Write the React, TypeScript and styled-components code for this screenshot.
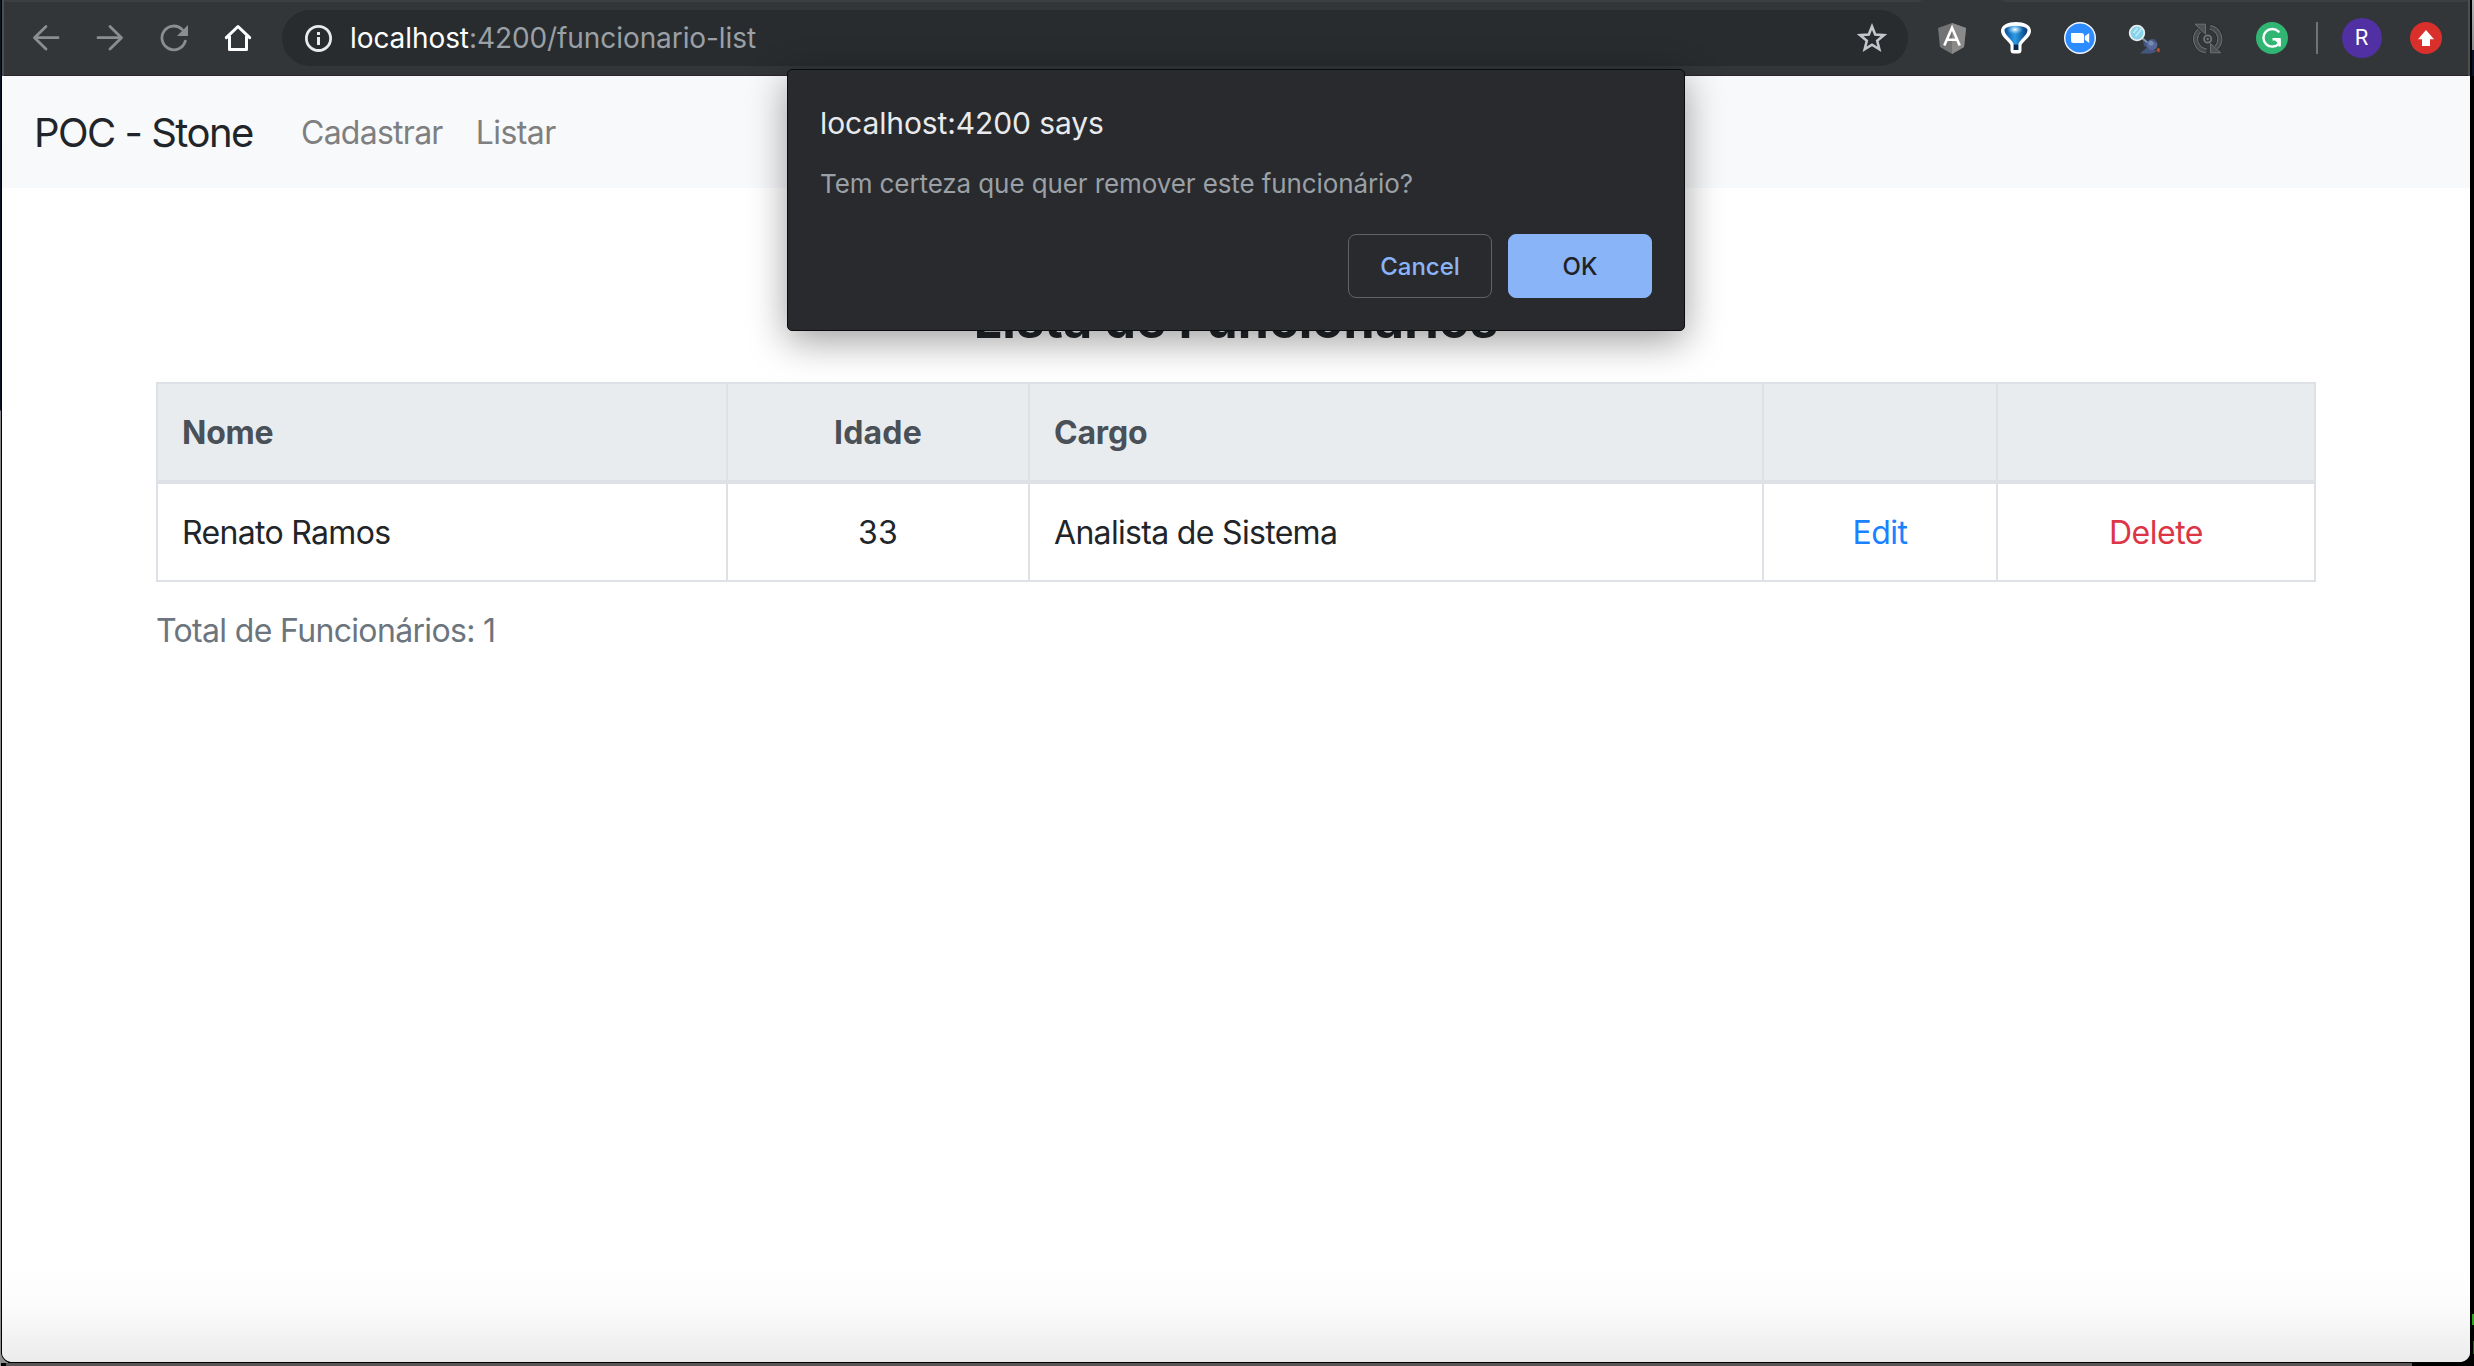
import React from "react";
import styled, { createGlobalStyle } from "styled-components";

const GlobalStyle = createGlobalStyle`
  *, *::before, *::after { box-sizing: border-box; }
  html, body { margin: 0; padding: 0; background: #000; }
  body { font-family: Inter, "Liberation Sans", sans-serif; overflow: hidden; }
  button { font: inherit; }
`;

/* ---------- desktop and window ---------- */

const Desktop = styled.div`
  height: 1366px;
  padding: 0 4px 4px 2px;
  background:
    linear-gradient(#000, #000) 1px 0 / 1px 1354px no-repeat,
    linear-gradient(#0b1524 0, #0b1220 410px, #85878b 411px, #8f9093 1366px) 0 0 / 1px 1366px no-repeat,
    linear-gradient(#8c8c8c, #8c8c8c) 0 1352px / 8px 11px no-repeat,
    linear-gradient(#b4b4b4, #8d8d8d) 2472px 0 / 2px 50px no-repeat,
    linear-gradient(#0a1226, #0a1226) 2472px 50px / 2px 26px no-repeat,
    linear-gradient(#2fa31f, #2fa31f) 2472px 1314px / 2px 11px no-repeat,
    linear-gradient(#205a1b, #205a1b) 2473px 1341px / 1px 13px no-repeat,
    linear-gradient(#5b5557, #5b5557) 6px 1363px / 2406px 3px no-repeat,
    #000;
`;

const BrowserWindow = styled.div`
  position: relative;
  display: flex;
  flex-direction: column;
  height: 1362px;
  overflow: hidden;
  border-radius: 0 0 10px 10px;
  box-shadow: 0 0 0 1px #000;
  background: #fff;
`;

/* ---------- browser toolbar ---------- */

const Toolbar = styled.header`
  display: flex;
  align-items: center;
  flex: none;
  height: 76px;
  padding: 0 26px 0 10px;
  border: solid #4c4f52;
  border-width: 0 2px;
  background:
    linear-gradient(#292529, #292529) 0 75px / 100% 1px no-repeat,
    linear-gradient(90deg, #3c3f42 1914px, #323639 1920px, #323639 1996px, #3c3f42 2002px) 0 0 / 100% 2px no-repeat,
    #323639;
`;

const ToolSlot = styled.span`
  display: flex;
  align-items: center;
  justify-content: center;
  flex: none;
  width: 64px;
  height: 76px;
`;

const AddressBar = styled.div`
  display: flex;
  align-items: center;
  width: 1626px;
  height: 56px;
  margin: 0 12px;
  padding: 0 21px 0 22px;
  border-radius: 28px;
  background: #282c2f;
`;

const Address = styled.div`
  flex: 1;
  margin-left: 18px;
  font-size: 28px;
  line-height: 56px;
  letter-spacing: -0.08px;
  color: #9aa0a6;
  white-space: pre;
`;

const Host = styled.span`
  color: #fff;
`;

const Divider = styled.span`
  width: 2px;
  height: 32px;
  margin: 0 24px 0 12px;
  background: #717477;
`;

const Avatar = styled.span`
  display: flex;
  align-items: center;
  justify-content: center;
  width: 40px;
  height: 40px;
  margin-right: 28px;
  padding-right: 1px;
  border-radius: 50%;
  background: #5030a2;
  color: #fff;
  font: 400 22px/40px Roboto, sans-serif;
`;

/* ---------- application ---------- */

const Navbar = styled.nav`
  display: flex;
  align-items: center;
  flex: none;
  height: 112px;
  padding: 2px 0 0 32px;
  background: #f8f9fb;
`;

const Brand = styled.a`
  width: 265px;
  font-size: 40px;
  line-height: 60px;
  letter-spacing: -1.52px;
  color: #212529;
  white-space: nowrap;
`;

const NavLinks = styled.div`
  display: flex;
  gap: 31px;
`;

const NavLink = styled.a<{ $tracking: string }>`
  font-size: 32px;
  line-height: 48px;
  letter-spacing: ${(p) => p.$tracking};
  color: #7f7f80;
  padding-left: 2px;
`;

const Page = styled.main`
  flex: 1;
  padding: 102px 154px 0;
  background: linear-gradient(#fff, #fff 1080px, #fbfbfb 1120px, #ebebeb 1174px);
`;

const Title = styled.h2`
  margin: 0 0 32px;
  font-size: 50px;
  font-weight: 700;
  line-height: 60px;
  letter-spacing: 0.25px;
  text-align: center;
  color: #212529;
`;

const Table = styled.table`
  width: 2160px;
  table-layout: fixed;
  border-collapse: separate;
  border-spacing: 0;
  border: solid #dee2e6;
  border-width: 0 2px 2px 0;
  font-size: 32px;
  line-height: 48px;
`;

const Column = styled.col<{ $width: number }>`
  width: ${(p) => p.$width}px;
`;

const HeadCell = styled.th<{ $center?: boolean; $tracking?: string }>`
  height: 98px;
  padding: 2px 24px 0;
  border: solid #dee2e6;
  border-width: 2px 0 0 2px;
  background: #e9ecef;
  color: #495057;
  font-weight: 700;
  letter-spacing: ${(p) => p.$tracking ?? "-0.2px"};
  text-align: ${(p) => (p.$center ? "center" : "left")};
`;

const Cell = styled.td<{ $center?: boolean; $tracking?: string }>`
  height: 100px;
  padding: 2px 24px 0;
  border: solid #dee2e6;
  border-width: 4px 0 0 2px;
  color: #212529;
  letter-spacing: ${(p) => p.$tracking ?? "-0.68px"};
  text-align: ${(p) => (p.$center ? "center" : "left")};
`;

const Action = styled.a<{ $danger?: boolean }>`
  letter-spacing: -0.48px;
  color: ${(p) => (p.$danger ? "#dc3545" : "#1a82ff")};
`;

const Total = styled.p`
  margin: 25px 0 0;
  font-size: 32px;
  line-height: 48px;
  letter-spacing: -0.66px;
  color: #6c757d;
`;

/* ---------- confirm dialog ---------- */

const Dialog = styled.div`
  position: absolute;
  top: 69px;
  left: 785px;
  width: 898px;
  height: 262px;
  display: flex;
  flex-direction: column;
  padding: 33px 32px 32px;
  border: 1px solid #0b0c0d;
  border-radius: 5px;
  background: #292a2d;
  box-shadow: 0 10px 38px rgba(0, 0, 0, 0.38);
`;

const DialogTitle = styled.div`
  font-size: 30px;
  line-height: 40px;
  letter-spacing: -0.1px;
  color: #e8eaed;
`;

const DialogMessage = styled.div`
  margin-top: 24px;
  font-size: 26px;
  line-height: 34px;
  letter-spacing: -0.1px;
  color: #9aa0a6;
`;

const DialogActions = styled.div`
  display: flex;
  justify-content: flex-end;
  gap: 16px;
  margin-top: auto;
`;

const DialogButton = styled.button<{ $primary?: boolean }>`
  width: 144px;
  height: 64px;
  padding: 0;
  border: 1px solid ${(p) => (p.$primary ? "#8ab4f8" : "#5f6368")};
  border-radius: 8px;
  background: ${(p) => (p.$primary ? "#8ab4f8" : "transparent")};
  color: ${(p) => (p.$primary ? "#202124" : "#8ab4f8")};
  font-size: 24px;
  font-weight: 500;
`;

/* ---------- icons ---------- */

const BackIcon = () => (
  <svg width="28" height="28" viewBox="0 0 28 28" fill="none" stroke="#8b8e90" strokeWidth="2.8" strokeLinecap="round" strokeLinejoin="round">
    <path d="M26 13.7H3M14 2.5L2.5 13.7 14 25" />
  </svg>
);

const ForwardIcon = () => (
  <svg width="28" height="28" viewBox="0 0 28 28" fill="none" stroke="#8b8e90" strokeWidth="2.8" strokeLinecap="round" strokeLinejoin="round">
    <path d="M2 13.7H25M14 2.5L25.5 13.7 14 25" />
  </svg>
);

const ReloadIcon = () => (
  <svg width="28" height="28" viewBox="0 0 28 28">
    <path d="M25.3 17.2A11.9 11.9 0 1 1 22.2 5.4" fill="none" stroke="#8b8e90" strokeWidth="2.8" strokeLinecap="round" />
    <path d="M28 1v11H17z" fill="#8b8e90" />
  </svg>
);

const HomeIcon = () => (
  <svg width="28" height="28" viewBox="0 0 28 28" fill="none" stroke="#fff" strokeWidth="3" strokeLinecap="round" strokeLinejoin="round">
    <path d="M2.3 13.7L14 2.5l11.7 11.2M5.5 12.5v13h17v-13" />
  </svg>
);

const InfoIcon = () => (
  <svg width="28" height="28" viewBox="0 0 28 28">
    <circle cx="14.5" cy="14.4" r="12.1" fill="none" stroke="#e8eaed" strokeWidth="2.8" />
    <path d="M13 8h3v3h-3zM13 13h3v8h-3z" fill="#e8eaed" />
  </svg>
);

const StarIcon = () => (
  <svg width="30" height="30" viewBox="0 0 30 30">
    <path d="M15 3.6l3.2 8 8.6.6-6.6 5.6 2.1 8.5-7.3-4.6-7.3 4.6 2.1-8.5-6.600-5.600 8.600-.6z" fill="none" stroke="#c3c7cb" strokeWidth="2.6" strokeLinejoin="miter" />
  </svg>
);

const AngularIcon = () => (
  <svg width="30" height="32" viewBox="0 0 30 32">
    <path d="M15 1l14 5-2 19-12 7L3 25 1 6z" fill="#737373" />
    <path d="M15 1l14 5-2 19-12 7z" fill="#8a8a8a" />
    <path d="M7.3 23.5L15 5.8l7.7 17.7M10.3 17.8h9.4" fill="none" stroke="#fff" strokeWidth="2.6" />
  </svg>
);

const FunnelIcon = () => (
  <svg width="32" height="32" viewBox="0 0 32 32">
    <defs>
      <linearGradient id="funnelBody" x1="0" x2="1">
        <stop offset="0" stopColor="#0b4f9c" />
        <stop offset=".45" stopColor="#2b9be6" />
        <stop offset="1" stopColor="#083b78" />
      </linearGradient>
      <radialGradient id="funnelGlow" cx=".5" cy=".5" r=".5">
        <stop offset="0" stopColor="#fff" />
        <stop offset="1" stopColor="#8fd0f5" stopOpacity="0" />
      </radialGradient>
    </defs>
    <path d="M16 0C24 0 31 3 31 9C31 14.500 24 18.500 21.500 23V28Q21.500 31.500 18.500 31.500H13.500Q10.500 31.500 10.500 28V23C8 18.500 1 14.500 1 9C1 3 8 0 16 0Z" fill="#fff" />
    <path d="M4.500 8C5 2.600 27 2.600 27.500 8C27.500 13.500 19.500 17.500 18.300 22.500V28H13.700V22.500C12.500 17.500 4.500 13.500 4.500 8Z" fill="url(#funnelBody)" />
    <ellipse cx="15" cy="7.500" rx="8" ry="5" fill="url(#funnelGlow)" />
    <path d="M13.700 22.500h4.600v5.500h-4.600z" fill="#09294f" />
  </svg>
);

const ZoomIcon = () => (
  <svg width="32" height="32" viewBox="0 0 32 32">
    <circle cx="16" cy="16" r="15.3" fill="#2d8cff" stroke="#f4f7fb" strokeWidth="1.4" />
    <path d="M7 11h10.500q2.500 0 2.500 2.500V21H9.500Q7 21 7 18.500zM20.800 14.300l4.400-3.300v10l-4.400-3.300z" fill="#fff" />
  </svg>
);

const InspectorIcon = () => (
  <svg width="32" height="32" viewBox="0 0 32 32">
    <path d="M14.500 16.500l6 5" stroke="#8396bd" strokeWidth="2" />
    <path d="M12 31.500l8-7 9 5-6 2zM15 19l1 5 5 2-2-5z" fill="#44557f" />
    <circle cx="24" cy="22.700" r="5.400" fill="#56689a" />
    <circle cx="23" cy="21" r="2.600" fill="#7889b4" />
    <path d="M20.500 17.500l3.500 1 3-1.500 1.500 4z" fill="#44557f" />
    <path d="M29.500 26l2.500.8-.8 4-2.700-2.300z" fill="#c1502c" />
    <circle cx="9" cy="11" r="7.300" fill="#86d2ea" stroke="#e8edf0" strokeWidth="1.800" />
    <path d="M5.500 11l4-5M7.500 14.500l6-7.500" stroke="#b9e8f5" strokeWidth="2" />
  </svg>
);

const SyncIcon = () => (
  <svg width="32" height="32" viewBox="0 0 32 32">
    <g fill="none" stroke="#202224" strokeWidth="6.4">
      <path d="M14.200 28.900A12 12 0 0 1 7.200 8.500M18 5.200A12 12 0 0 1 24.200 25.500" />
    </g>
    <g fill="none" stroke="#6d6f71" strokeWidth="5.2">
      <path d="M14.200 28.900A12 12 0 0 1 7.200 8.500M18 5.200A12 12 0 0 1 24.200 25.500" />
    </g>
    <g fill="none" stroke="#474a4c" strokeWidth="3.2">
      <path d="M14.200 28.900A12 12 0 0 1 7.200 8.500M18 5.200A12 12 0 0 1 24.200 25.500" />
    </g>
    <path d="M3 2.200H13.500V12zM28.700 30.800H18.500V21.500z" fill="#505355" stroke="#6d6f71" strokeWidth="1" />
    <circle cx="15.700" cy="17" r="3.600" fill="#323639" stroke="#737577" strokeWidth="1.800" />
    <circle cx="15.700" cy="17" r="1.200" fill="#737577" />
  </svg>
);

const GrammarlyIcon = () => (
  <svg width="32" height="32" viewBox="0 0 32 32">
    <circle cx="16" cy="16" r="16" fill="#31b573" />
    <path d="M22.600 9.700A8.800 8.800 0 1 0 23 21.400" fill="none" stroke="#fff" strokeWidth="2.400" strokeLinecap="round" />
    <path d="M16.500 17.300h7v7.200" fill="none" stroke="#fff" strokeWidth="2.400" />
    <path d="M18.300 17.600h6.400v6.600z" fill="#fff" />
  </svg>
);

const UpdateIcon = () => (
  <svg width="32" height="32" viewBox="0 0 32 32">
    <circle cx="16" cy="16" r="16" fill="#d9302c" />
    <path d="M16 8l8 9.300h-4V24h-8v-6.700H8z" fill="#fff" />
  </svg>
);

/* ---------- page ---------- */

const extensions = [AngularIcon, FunnelIcon, ZoomIcon, InspectorIcon, SyncIcon, GrammarlyIcon];
const navigation = [BackIcon, ForwardIcon, ReloadIcon, HomeIcon];
const columnWidths = [570, 302, 734, 234, 318];
const employees = [{ nome: "Renato Ramos", idade: 33, cargo: "Analista de Sistema" }];

export default function App() {
  return (
    <Desktop>
      <GlobalStyle />
      <BrowserWindow>
        <Toolbar>
          {navigation.map((Icon, i) => (
            <ToolSlot key={i}><Icon /></ToolSlot>
          ))}
          <AddressBar>
            <InfoIcon />
            <Address><Host>localhost</Host>:4200/funcionario-list</Address>
            <StarIcon />
          </AddressBar>
          {extensions.map((Icon, i) => (
            <ToolSlot key={i}><Icon /></ToolSlot>
          ))}
          <Divider />
          <Avatar>R</Avatar>
          <UpdateIcon />
        </Toolbar>

        <Navbar>
          <Brand>POC - Stone</Brand>
          <NavLinks>
            <NavLink $tracking="-0.74px">Cadastrar</NavLink>
            <NavLink $tracking="-0.57px">Listar</NavLink>
          </NavLinks>
        </Navbar>

        <Page>
          <Title>Lista de Funcionários</Title>
          <Table>
            <colgroup>
              {columnWidths.map((w, i) => <Column key={i} $width={w} />)}
            </colgroup>
            <thead>
              <tr>
                <HeadCell>Nome</HeadCell>
                <HeadCell $center $tracking="0.2px">Idade</HeadCell>
                <HeadCell>Cargo</HeadCell>
                <HeadCell />
                <HeadCell />
              </tr>
            </thead>
            <tbody>
              {employees.map((e) => (
                <tr key={e.nome}>
                  <Cell>{e.nome}</Cell>
                  <Cell $center $tracking="0.2px">{e.idade}</Cell>
                  <Cell>{e.cargo}</Cell>
                  <Cell $center><Action>Edit</Action></Cell>
                  <Cell $center><Action $danger>Delete</Action></Cell>
                </tr>
              ))}
            </tbody>
          </Table>
          <Total>Total de Funcionários: {employees.length}</Total>
        </Page>

        <Dialog role="alertdialog">
          <DialogTitle>localhost:4200 says</DialogTitle>
          <DialogMessage>Tem certeza que quer remover este funcionário?</DialogMessage>
          <DialogActions>
            <DialogButton>Cancel</DialogButton>
            <DialogButton $primary>OK</DialogButton>
          </DialogActions>
        </Dialog>
      </BrowserWindow>
    </Desktop>
  );
}
